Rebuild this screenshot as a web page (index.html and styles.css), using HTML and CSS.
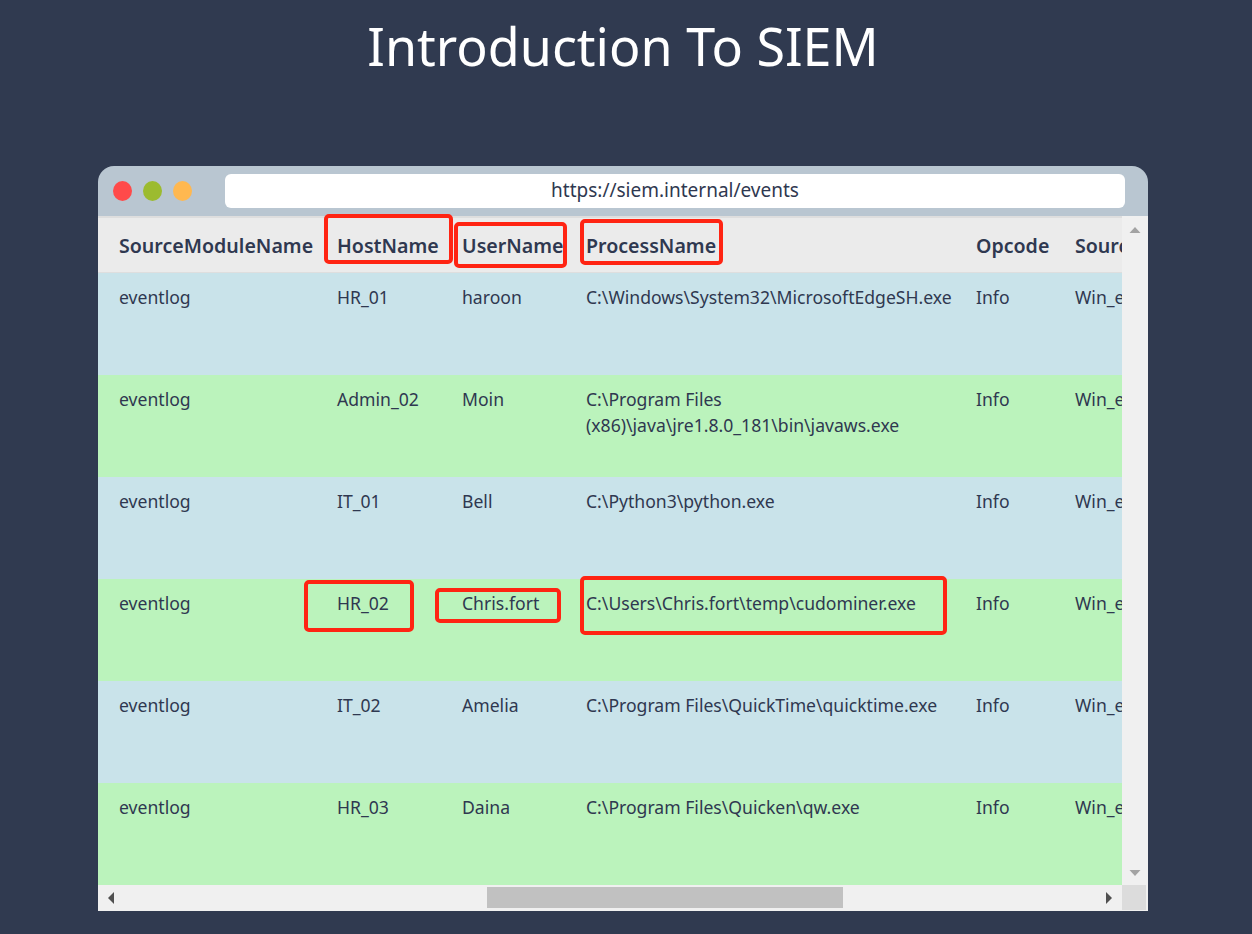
FILE: index.html
```html
<!DOCTYPE html>
<html lang="en">
<head>
<meta charset="utf-8">
<title>Introduction To SIEM</title>
<link rel="stylesheet" href="styles.css">
</head>
<body>
<h1 class="title">Introduction To SIEM</h1>
<div class="window">
  <div class="titlebar">
    <div class="dots">
      <span class="dot dot-red"></span>
      <span class="dot dot-green"></span>
      <span class="dot dot-orange"></span>
    </div>
    <div class="url">https://siem.internal/events</div>
  </div>
  <div class="content">
    <div class="viewport">
      <table class="events">
        <colgroup>
          <col class="c1"><col class="c2"><col class="c3"><col class="c4"><col class="c5"><col class="c6">
        </colgroup>
        <thead>
          <tr><th>SourceModuleName</th><th>HostName</th><th>UserName</th><th>ProcessName</th><th>Opcode</th><th>SourceName</th></tr>
        </thead>
        <tbody>
          <tr class="blue"><td>eventlog</td><td>HR_01</td><td>haroon</td><td>C:\Windows\System32\MicrosoftEdgeSH.exe</td><td>Info</td><td>Win_eventlog</td></tr>
          <tr class="green"><td>eventlog</td><td>Admin_02</td><td>Moin</td><td>C:\Program Files (x86)\java\jre1.8.0_181\bin\javaws.exe</td><td>Info</td><td>Win_eventlog</td></tr>
          <tr class="blue"><td>eventlog</td><td>IT_01</td><td>Bell</td><td>C:\Python3\python.exe</td><td>Info</td><td>Win_eventlog</td></tr>
          <tr class="green"><td>eventlog</td><td>HR_02</td><td>Chris.fort</td><td>C:\Users\Chris.fort\temp\cudominer.exe</td><td>Info</td><td>Win_eventlog</td></tr>
          <tr class="blue"><td>eventlog</td><td>IT_02</td><td>Amelia</td><td>C:\Program Files\QuickTime\quicktime.exe</td><td>Info</td><td>Win_eventlog</td></tr>
          <tr class="green"><td>eventlog</td><td>HR_03</td><td>Daina</td><td>C:\Program Files\Quicken\qw.exe</td><td>Info</td><td>Win_eventlog</td></tr>
        </tbody>
      </table>
    </div>
    <div class="vscroll">
      <svg class="arrow" width="12" height="8" viewBox="0 0 12 8"><path class="arrow-light" d="M6 1 L11.5 7 L.5 7 Z"/></svg>
      <svg class="arrow" width="12" height="8" viewBox="0 0 12 8"><path class="arrow-light" d="M6 7 L11.5 1 L.5 1 Z"/></svg>
    </div>
    <div class="hscroll">
      <svg class="arrow" width="7" height="12" viewBox="0 0 7 12"><path class="arrow-dark" d="M1 6 L7 0 L7 12 Z"/></svg>
      <div class="track"><div class="thumb"></div></div>
      <svg class="arrow" width="7" height="12" viewBox="0 0 7 12"><path class="arrow-dark" d="M6 6 L0 0 L0 12 Z"/></svg>
    </div>
    <div class="corner"></div>
  </div>
  <span class="mark mark-host-head"></span>
  <span class="mark mark-user-head"></span>
  <span class="mark mark-proc-head"></span>
  <span class="mark mark-host"></span>
  <span class="mark mark-user"></span>
  <span class="mark mark-proc"></span>
</div>
</body>
</html>
```

FILE: styles.css
```css
* { box-sizing: border-box; }
html, body { margin: 0; height: 100%; }
body {
  background: #303a50;
  font-family: "Noto Sans", "Open Sans", sans-serif;
  color: #2f3850;
  overflow: hidden;
}
.title {
  margin: 0;
  padding: 11px 6px 0 0;
  height: 166px;
  text-align: center;
  color: #fff;
  font-size: 52px;
  line-height: 70px;
  font-weight: 400;
}
.window {
  position: relative;
  width: 1050px;
  height: 745px;
  margin-left: 98px;
  border-radius: 16px 16px 0 0;
  overflow: visible;
}
.titlebar {
  height: 50px;
  background: #b9c6d1;
  border-radius: 16px 16px 0 0;
  display: flex;
  align-items: center;
  padding: 0 23px 0 15px;
}
.dots { display: flex; gap: 11px; width: 112px; }
.dot { width: 19px; height: 20px; border-radius: 50%; }
.dot-red { background: #ff4a4a; }
.dot-green { background: #9cbb2f; }
.dot-orange { background: #ffb850; }
.url {
  flex: 1;
  height: 34px;
  background: #fff;
  border-radius: 6px;
  text-align: center;
  font-size: 19px;
  line-height: 33px;
}
.content {
  display: grid;
  grid-template-columns: 1024px 26px;
  grid-template-rows: 669px 26px;
  background: #f0f0f0;
}
.viewport { overflow: hidden; background: #f0f0f0; }
.events {
  table-layout: fixed;
  width: 1200px;
  border-collapse: separate;
  border-spacing: 0;
  font-size: 17.6px;
  line-height: 26px;
}
.c1 { width: 218px; }
.c2 { width: 125px; }
.c3 { width: 124px; }
.c4 { width: 390px; }
.c5 { width: 99px; }
.c6 { width: 244px; }
.events th {
  height: 57px;
  padding: 2px 0 0 21px;
  background: #ebebeb;
  border-top: 2px solid #dedede;
  border-bottom: 1px solid #dedede;
  text-align: left;
  font-size: 19.6px;
  font-weight: 600;
  white-space: nowrap;
}
.events td {
  height: 102px;
  padding: 11px 17px 0 21px;
  vertical-align: top;
}
.blue td { background: #c9e3ea; }
.green td { background: #bbf3bc; }
.vscroll {
  display: flex;
  flex-direction: column;
  justify-content: space-between;
  align-items: center;
  padding: 10px 0 8px;
  background: #f0f0f0;
}
.arrow { display: block; flex: none; }
.arrow-light { fill: #a3a3a3; }
.arrow-dark { fill: #505050; }
.hscroll {
  display: flex;
  align-items: center;
  padding: 0 9px 1px;
  background: #f0f0f0;
}
.track { flex: 1; height: 21px; padding-left: 373px; }
.thumb { width: 356px; height: 21px; background: #c1c1c1; }
.corner { background: #dcdcdc; margin: 0 2px 1px 0; }
.mark {
  position: absolute;
  border: 4px solid #ff2413;
  border-radius: 5px;
}
.mark-host-head { left: 226px; top: 48px; width: 129px; height: 50px; }
.mark-user-head { left: 356px; top: 56px; width: 113px; height: 46px; }
.mark-proc-head { left: 482px; top: 53px; width: 143px; height: 46px; }
.mark-host { left: 206px; top: 414px; width: 110px; height: 52px; }
.mark-user { left: 337px; top: 422px; width: 126px; height: 35px; }
.mark-proc { left: 482px; top: 410px; width: 367px; height: 59px; }
```
